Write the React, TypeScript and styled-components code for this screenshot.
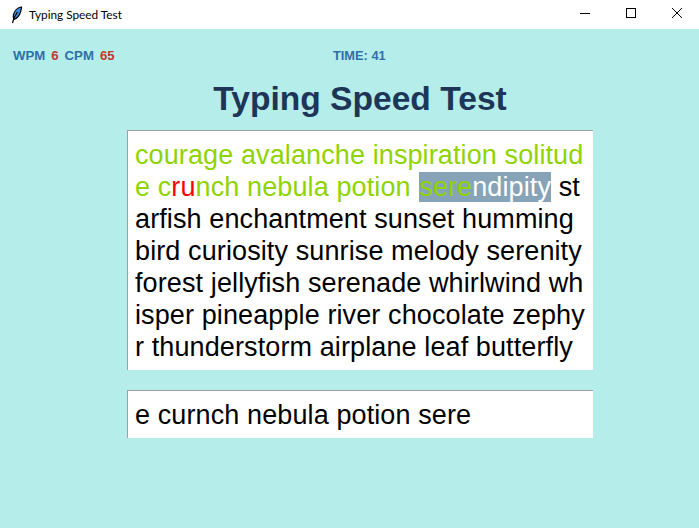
import styled, { createGlobalStyle } from 'styled-components';

const GlobalStyle = createGlobalStyle`
  html, body {
    margin: 0;
    padding: 0;
    background: #b5edea;
  }
`;

const Window = styled.div`
  width: 699px;
  height: 528px;
  display: flex;
  flex-direction: column;
  overflow: hidden;
  background-color: #b5edea;
  font-family: 'Liberation Sans', Arial, sans-serif;
`;

const TitleBar = styled.div`
  height: 29px;
  display: flex;
  flex-direction: row;
  align-items: center;
  background-color: #ffffff;
  padding-left: 10px;
`;

const TitleText = styled.div`
  margin-left: 6px;
  font-family: 'Lato', sans-serif;
  font-size: 11.8px;
  color: #000000;
`;

const WindowButtons = styled.div`
  margin-left: auto;
  margin-right: -1px;
  display: flex;
  flex-direction: row;
  align-self: flex-start;
`;

const WindowButton = styled.div`
  width: 46px;
  height: 26px;
  display: flex;
  align-items: center;
  justify-content: center;
`;

const StatsBar = styled.div`
  height: 52px;
  display: grid;
  grid-template-columns: 320px auto;
  align-items: center;
  padding-left: 13px;
  font-size: 13.2px;
  font-weight: 700;
  color: #2e6fad;
`;

const Stats = styled.div`
  display: flex;
  flex-direction: row;
  gap: 6px;
`;

const StatValue = styled.span`
  color: #c0392b;
`;

const TimeLabel = styled.span`
  font-size: 12.8px;
`;

const Heading = styled.h1`
  margin: 0 0 0 21px;
  height: 48px;
  line-height: 36px;
  font-size: 33.6px;
  font-weight: 700;
  text-align: center;
  color: #1d3557;
`;

const TextBox = styled.div<{ $top: number }>`
  width: 466px;
  margin-top: ${(p) => p.$top}px;
  margin-left: 127px;
  box-sizing: border-box;
  padding: 8px 0 7px 7px;
  border-top: 1px solid #a0a0a0;
  border-left: 1px solid #a0a0a0;
  background-color: #ffffff;
  font-size: 27px;
  line-height: 32px;
  letter-spacing: 0.11px;
  color: #000000;
`;

const Line = styled.div`
  white-space: pre;
`;

const Done = styled.span`
  color: #8fd400;
`;

const Wrong = styled.span`
  color: #ff0000;
`;

const Current = styled.span`
  margin-left: 1px;
  background-color: #86a3b8;
  color: #ffffff;
`;

const App = () => {
  return (
    <Window>
      <GlobalStyle />
      <TitleBar>
        <svg width="13" height="18" viewBox="0 0 13 18">
          <path d="M11.5 1C8 1.5 4.5 4.500 3.500 8.500c-.5 2-.3 3.500.3 5C6.500 12.500 9.500 9.500 10.500 6c.6-2 1-3 1-5z" fill="#3f8fe8" stroke="#000" strokeWidth="1.200" />
          <path d="M7.500 6 4 12 2.500 17" fill="none" stroke="#000" strokeWidth="1.200" />
        </svg>
        <TitleText>Typing Speed Test</TitleText>
        <WindowButtons>
          <WindowButton>
            <svg width="10" height="10" viewBox="0 0 10 10">
              <path d="M0 5.5h10" stroke="#000" strokeWidth="1" />
            </svg>
          </WindowButton>
          <WindowButton>
            <svg width="10" height="10" viewBox="0 0 10 10">
              <rect x="0.5" y="0.5" width="9" height="9" fill="none" stroke="#000" strokeWidth="1" />
            </svg>
          </WindowButton>
          <WindowButton>
            <svg width="10" height="10" viewBox="0 0 10 10">
              <path d="M0 0l10 10M10 0 0 10" stroke="#000" strokeWidth="1" />
            </svg>
          </WindowButton>
        </WindowButtons>
      </TitleBar>
      <StatsBar>
        <Stats>
          <span>WPM</span>
          <StatValue>6</StatValue>
          <span>CPM</span>
          <StatValue>65</StatValue>
        </Stats>
        <TimeLabel>TIME: 41</TimeLabel>
      </StatsBar>
      <Heading>Typing Speed Test</Heading>
      <TextBox $top={1}>
        <Line>
          <Done>courage avalanche inspiration solitud</Done>
        </Line>
        <Line>
          <Done>e c</Done>
          <Wrong>ru</Wrong>
          <Done>nch nebula potion </Done>
          <Current>
            <Done>sere</Done>ndipity
          </Current>{' '}
          st
        </Line>
        <Line>arfish enchantment sunset humming</Line>
        <Line>bird curiosity sunrise melody serenity</Line>
        <Line>forest jellyfish serenade whirlwind wh</Line>
        <Line>isper pineapple river chocolate zephy</Line>
        <Line>r thunderstorm airplane leaf butterfly</Line>
      </TextBox>
      <TextBox $top={20}>
        <Line>e curnch nebula potion sere</Line>
      </TextBox>
    </Window>
  );
};

export default App;
